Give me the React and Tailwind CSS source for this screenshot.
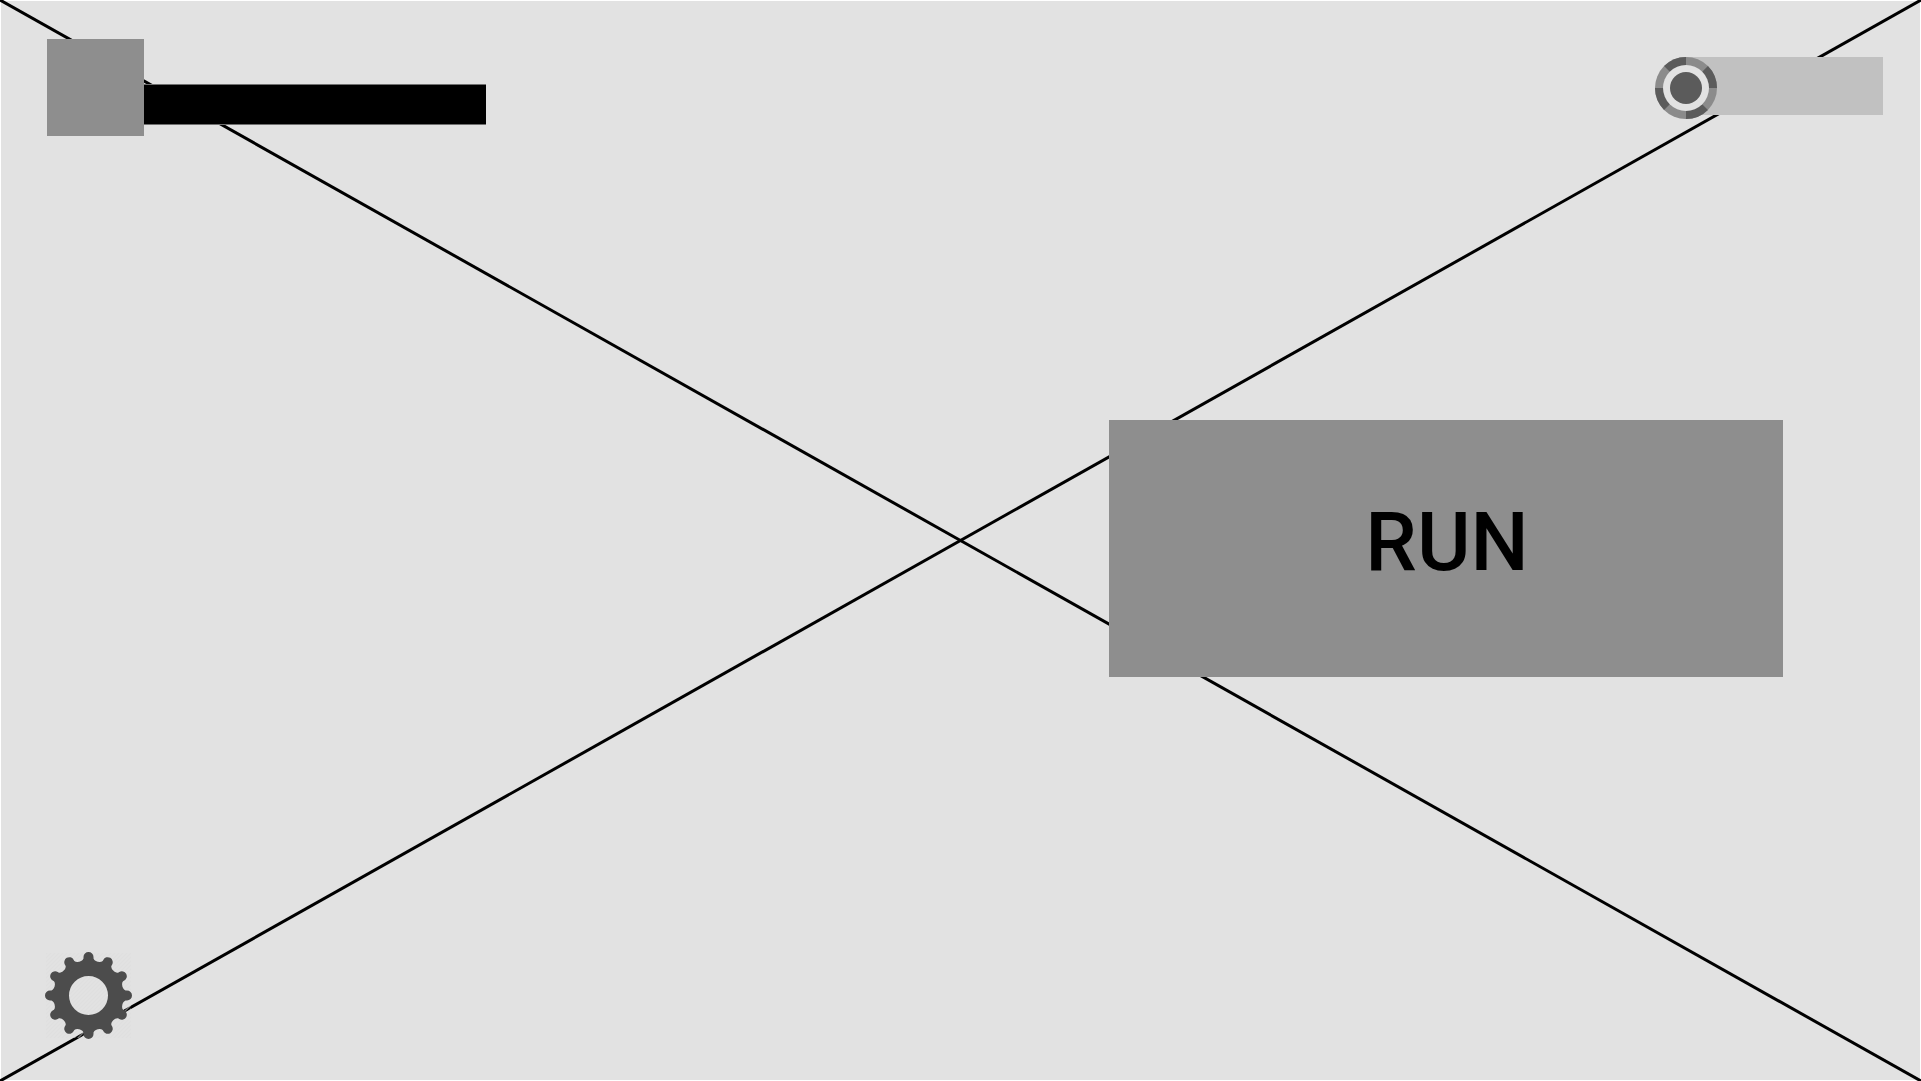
const TEETH = Array.from({ length: 12 }, (_, i) => i * 30);

function polar(x, r, deg) {
  const a = (deg * Math.PI) / 180;
  const px = x * Math.cos(a) + r * Math.sin(a);
  const py = x * Math.sin(a) - r * Math.cos(a);
  return `${px.toFixed(2)} ${py.toFixed(2)}`;
}

const GEAR_PATH =
  TEETH.map((deg, i) => {
    const next = deg + 30;
    return [
      `${i === 0 ? "M" : "L"}${polar(-5, 37, deg)}`,
      `L${polar(-5, 38.5, deg)}`,
      `A5 5 0 0 1 ${polar(5, 38.5, deg)}`,
      `L${polar(5, 37, deg)}`,
      `C${polar(6, 34, deg)} ${polar(-6, 34, next)} ${polar(-5, 37, next)}`,
    ].join("");
  }).join("") + "ZM19.5 0A19.5 19.5 0 1 0 -19.5 0A19.5 19.5 0 1 0 19.5 0Z";

function Backdrop() {
  return (
    <svg
      className="pointer-events-none absolute -inset-px h-[calc(100%+2px)] w-[calc(100%+2px)]"
      aria-hidden="true"
    >
      <line x1="0" y1="0" x2="100%" y2="100%" stroke="#000" strokeWidth="3" />
      <line x1="0" y1="100%" x2="100%" y2="0" stroke="#000" strokeWidth="3" />
    </svg>
  );
}

function Profile() {
  return (
    <div className="flex items-start">
      <div className="size-[97px] bg-[#8e8e8e]" />
      <div className="mt-[45px] h-[41px] w-[342px] border-y border-[#707070] bg-black" />
    </div>
  );
}

function Coin() {
  return (
    <svg className="relative size-[62px]" viewBox="-31 -31 62 62" aria-hidden="true">
      <circle r="31" fill="#8b8b8b" />
      {[45, 135, 225, 315].map((deg) => (
        <path
          key={deg}
          d="M0 0L0 -31A31 31 0 0 1 21.92 -21.92Z"
          fill="#5b5b5b"
          transform={`rotate(${deg})`}
        />
      ))}
      <circle r="23" fill="#e2e2e2" />
      <circle r="16" fill="#5b5b5b" />
    </svg>
  );
}

function Balance() {
  return (
    <div className="mt-[18px] flex items-start">
      <Coin />
      <div className="-ml-[31px] h-[58px] w-[197px] bg-[#c1c1c1]" />
    </div>
  );
}

function Gear() {
  return (
    <svg className="size-[87px]" viewBox="-43.5 -43.5 87 87" aria-hidden="true">
      <defs>
        <pattern id="hatch" width="4" height="4" patternUnits="userSpaceOnUse">
          <path d="M-1 1L1 -1M0 4L4 0M3 5L5 3" stroke="#dcdcdc" strokeWidth="1" />
        </pattern>
      </defs>
      <rect x="-42.5" y="-42.5" width="85" height="85" fill="url(#hatch)" />
      <path d={GEAR_PATH} fill="#4c4c4c" fillRule="evenodd" />
    </svg>
  );
}

export default function App() {
  return (
    <main className="relative flex min-h-screen flex-col border border-white bg-[#e2e2e2] pt-[38px] pb-[41px]">
      <Backdrop />
      <header className="relative flex items-start justify-between pr-[37px] pl-[46px]">
        <Profile />
        <Balance />
      </header>
      <section className="relative flex flex-1 items-center justify-end pt-[9px] pr-[137px]">
        <button
          type="button"
          className="h-[257px] w-[674px] max-w-full bg-[#8e8e8e] pb-3.5 pl-0.5 font-['Roboto',sans-serif] text-[82px] leading-none font-medium text-black"
        >
          RUN
        </button>
      </section>
      <footer className="relative flex pl-[44px]">
        <button type="button" aria-label="Settings">
          <Gear />
        </button>
      </footer>
    </main>
  );
}
